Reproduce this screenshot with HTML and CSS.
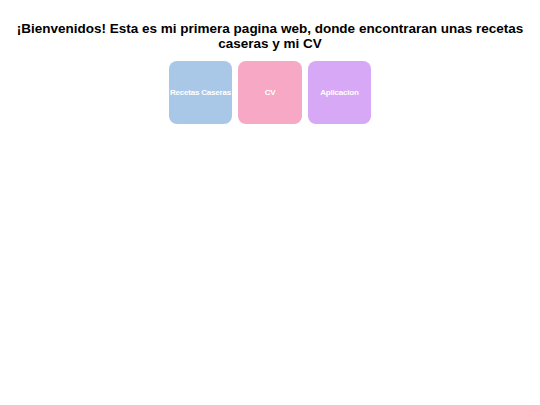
FILE: index.html
```html
<!DOCTYPE html>
<html lang="es">
<head>
<meta charset="utf-8">
<title>Bienvenidos</title>
<link rel="stylesheet" href="styles.css">
</head>
<body>
<h1 class="title">¡Bienvenidos! Esta es mi primera pagina web, donde encontraran unas recetas caseras y mi CV</h1>
<div class="cards">
  <a class="card card-blue" href="#">Recetas Caseras</a>
  <a class="card card-pink" href="#">CV</a>
  <a class="card card-purple" href="#">Aplicacion</a>
</div>
</body>
</html>
```
FILE: styles.css
```css
body {
  margin: 0;
  padding: 21px 8px 0;
  font-family: "Liberation Sans", Arial, sans-serif;
  background: #ffffff;
}
.title {
  margin: 0;
  text-align: center;
  font-size: 13.5px;
  line-height: 15px;
  font-weight: bold;
  color: #000;
}
.cards {
  display: flex;
  justify-content: center;
  gap: 6px;
  margin-top: 10px;
}
.card {
  width: 63.5px;
  height: 63px;
  border-radius: 8px;
  display: flex;
  align-items: center;
  justify-content: center;
  color: #fff;
  font-size: 8px;
  letter-spacing: -0.2px;
  font-weight: bold;
  text-decoration: none;
  white-space: nowrap;
}
.card-blue { background: #a9c8e8; }
.card-pink { background: #f7a8c4; }
.card-purple { background: #d6a8f5; }
```
